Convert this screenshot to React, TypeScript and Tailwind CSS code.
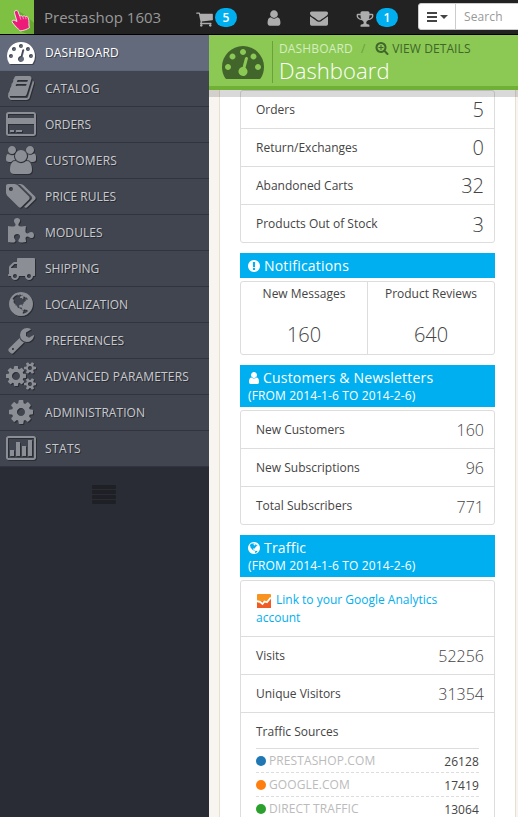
import React from "react";

type Glyph = { d: string; w: number };

const GLYPHS = {
  dashboard: { w: 1792, d: "M384 1152q0-53-37.5-90.5t-90.5-37.5-90.5 37.5-37.5 90.5 37.5 90.5 90.5 37.5 90.5-37.5 37.5-90.5zm192-448q0-53-37.5-90.5t-90.5-37.5-90.5 37.5-37.5 90.5 37.5 90.5 90.5 37.5 90.5-37.5 37.5-90.5zm428 481l101-382q6-26-7.5-48.5t-38.5-29.5-48 6.5-30 39.5l-101 382q-60 5-107 43.5t-63 98.5q-20 77 20 146t117 89 146-20 89-117q16-60-6-117t-72-91zm660-33q0-53-37.5-90.5t-90.5-37.5-90.5 37.5-37.5 90.5 37.5 90.5 90.5 37.5 90.5-37.5 37.5-90.5zm-640-640q0-53-37.5-90.5t-90.5-37.5-90.5 37.5-37.5 90.5 37.5 90.5 90.5 37.5 90.5-37.5 37.5-90.5zm448 192q0-53-37.5-90.5t-90.5-37.5-90.5 37.5-37.5 90.5 37.5 90.5 90.5 37.5 90.5-37.5 37.5-90.5zm320 448q0 261-141 483-19 29-54 29h-1402q-35 0-54-29-141-221-141-483 0-182 71-348t191-286 286-191 348-71 348 71 286 191 191 286 71 348z" },
  book: { w: 1792, d: "M1703 478q40 57 18 129l-275 906q-19 64-76.5 107.5t-122.5 43.5h-923q-77 0-148.5-53.5t-99.5-131.5q-24-67-2-127 0-4 3-27t4-37q1-8-3-21.5t-3-19.5q2-11 8-21t16.5-23.5 16.5-23.5q23-38 45-91.5t30-91.5q3-10 .5-30t-.5-28q3-11 17-28t17-23q21-36 42-92t25-90q1-9-2.5-32t.5-28q4-13 22-30.5t22-22.5q19-26 42.5-84.5t27.5-96.5q1-8-3-25.5t-2-26.5q2-8 9-18t18-23 17-21q8-12 16.5-30.5t15-35 16-36 19.5-32 26.5-23.5 36-11.5 47.5 5.5l-1 3q38-9 51-9h761q74 0 114 56t18 130l-274 906q-36 119-71.5 153.5t-128.5 34.5h-869q-27 0-38 15-11 16-1 43 24 70 144 70h923q29 0 56-15.5t35-41.5l300-987q7-22 5-57 38 15 59 43zm-1064 2q-4 13 2 22.5t20 9.5h608q13 0 25.5-9.5t16.5-22.5l21-64q4-13-2-22.5t-20-9.5h-608q-13 0-25.5 9.5t-16.5 22.5zm-83 256q-4 13 2 22.5t20 9.5h608q13 0 25.5-9.5t16.5-22.5l21-64q4-13-2-22.5t-20-9.5h-608q-13 0-25.5 9.5t-16.5 22.5z" },
  card: { w: 1920, d: "M1760 128q66 0 113 47t47 113v1216q0 66-47 113t-113 47h-1600q-66 0-113-47t-47-113v-1216q0-66 47-113t113-47h1600zm-1600 128q-13 0-22.5 9.5t-9.5 22.5v224h1664v-224q0-13-9.5-22.5t-22.5-9.5h-1600zm1600 1280q13 0 22.5-9.5t9.5-22.5v-608h-1664v608q0 13 9.5 22.5t22.5 9.5h1600zm-1504-128v-128h256v128h-256zm384 0v-128h384v128h-384z" },
  users: { w: 1920, d: "M593 896q-162 5-265 128h-134q-82 0-138-40.5t-56-118.5q0-353 124-353 6 0 43.5 21t97.5 42.5 119 21.5q67 0 133-23-5 37-5 66 0 159 93 293zm1071 637q0 120-73 189.5t-194 69.5h-874q-121 0-194-69.5t-73-189.5q0-53 3.5-103.5t14-109 26.5-108.5 43-97.5 62-81 85.5-53.5 111.5-20q10 0 43 21.5t73 48 107 48 135 21.5 135-21.5 107-48 73-48 43-21.5q61 0 111.5 20t85.5 53.5 62 81 43 97.5 26.5 108.5 14 109 3.5 103.5zm-1024-1277q0 106-75 181t-181 75-181-75-75-181 75-181 181-75 181 75 75 181zm704 384q0 159-112.5 271.5t-271.5 112.5-271.5-112.5-112.5-271.5 112.5-271.5 271.5-112.5 271.5 112.5 112.5 271.5zm576 225q0 78-56 118.5t-138 40.5h-134q-103-123-265-128 93-134 93-293 0-29-5-66 66 23 133 23 59 0 119-21.5t97.5-42.5 43.5-21q124 0 124 353zm-128-609q0 106-75 181t-181 75-181-75-75-181 75-181 181-75 181 75 75 181z" },
  tags: { w: 1920, d: "M448 448q0-53-37.5-90.5t-90.5-37.5-90.5 37.5-37.5 90.5 37.5 90.5 90.5 37.5 90.5-37.5 37.5-90.5zm1067 576q0 53-37 90l-491 492q-39 37-91 37-53 0-90-37l-715-716q-38-37-64.5-101t-26.5-117v-416q0-52 38-90t90-38h416q53 0 117 26.5t102 64.5l715 714q37 39 37 91zm384 0q0 53-37 90l-491 492q-39 37-91 37-36 0-59-14t-53-45l470-470q37-37 37-90 0-52-37-91l-715-714q-38-38-102-64.5t-117-26.5h224q53 0 117 26.5t102 64.5l715 714q37 39 37 91z" },
  puzzle: { w: 1792, d: "M1728 1098q0 81-44.5 135t-123.5 54q-41 0-77.5-17.5t-59-38-56.5-38-71-17.5q-110 0-110 124 0 39 16 115t15 115v5q-22 0-33 1-34 3-97.5 11.5t-115.5 13.5-98 5q-61 0-103-26.5t-42-83.5q0-37 17.5-71t38-56.5 38-59 17.5-77.5q0-79-54-123.5t-135-44.5q-84 0-143 45.5t-59 127.5q0 43 15 83t33.5 64.5 33.5 53 15 50.5q0 45-46 89-37 35-117 35-95 0-245-24-9-2-27.5-4t-27.5-4l-13-2q-1 0-3-1-2 0-2-1v-1024q2 1 17.5 3.5t34 5 21.5 3.5q150 24 245 24 80 0 117-35 46-44 46-89 0-22-15-50.5t-33.5-53-33.5-64.5-15-83q0-82 59-127.5t144-45.5q80 0 134 44.5t54 123.5q0 41-17.5 77.5t-38 59-38 56.5-17.5 71q0 57 42 83.5t103 26.5q64 0 180-15t163-17v2q-1 2-3.5 17.5t-5 34-3.5 21.5q-24 150-24 245 0 80 35 117 44 46 89 46 22 0 50.5-15t53-33.5 64.5-33.5 83-15q82 0 127.5 59t45.5 143z" },
  truck: { w: 1792, d: "M640 1408q0-52-38-90t-90-38-90 38-38 90 38 90 90 38 90-38 38-90zm-384-512h384v-256h-158q-13 0-22 9l-195 195q-9 9-9 22v30zm1280 512q0-52-38-90t-90-38-90 38-38 90 38 90 90 38 90-38 38-90zm256-1088v1024q0 15-4 26.5t-13.5 18.5-16.5 11.5-23.5 6-22.5 2-25.5 0-22.5-.5q0 106-75 181t-181 75-181-75-75-181h-384q0 106-75 181t-181 75-181-75-75-181h-64q-3 0-22.5.5t-25.5 0-22.5-2-23.5-6-16.5-11.5-13.5-18.5-4-26.5q0-26 19-45t45-19v-320q0-8-.5-35t0-38 2.5-34.5 6.5-37 14-30.5 22.5-30l198-198q19-19 50.5-32t58.5-13h160v-192q0-26 19-45t45-19h1024q26 0 45 19t19 45z" },
  globe: { w: 1792, d: "M896 128q209 0 385.5 103t279.5 279.5 103 385.5-103 385.5-279.5 279.5-385.5 103-385.5-103-279.5-279.5-103-385.5 103-385.5 279.5-279.5 385.5-103zm274 521q-2 1-9.5 9.5t-13.5 9.5q2 0 4.5-5t5-11 3.5-7q6-7 22-15 14-6 52-12 34-8 51 11-2-2 9.5-13t14.5-12q3-2 15-4.5t15-7.5l2-22q-12 1-17.5-7t-6.5-21q0 2-6 8 0-7-4.5-8t-11.5 1-9 1q-10-3-15-7.5t-8-16.5-4-15q-2-5-9.5-11t-9.5-10q-1-2-2.5-5.5t-3-6.5-4-5.5-5.5-2.5-7 5-7.5 10-4.5 5q-3-2-6-1.5t-4.5 1-4.5 3-5 3.5q-3 2-8.5 3t-8.5 2q15-5-1-11-10-4-16-3 9-4 7.5-12t-8.5-14h5q-1-4-8.5-8.5t-17.5-8.5-13-6q-8-5-34-9.5t-33-.5q-5 6-4.5 10.5t4 14 3.5 12.5q1 6-5.5 13t-6.5 12q0 7 14 15.5t10 21.5q-3 8-16 16t-16 12q-5 8-1.5 18.5t10.5 16.5q2 2 1.500 4t-3.500 4.500-5.500 4-6.500 3.500l-3 2q-11 5-20.500-6t-13.500-26q-7-25-16-30-23-8-29 1-5-13-41-26-25-9-58-4 6-1 0-15-7-15-19-12 3-6 4-17.500t1-13.500q3-13 12-23 1-1 7-8.500t9.500-13.500.5-6q35 4 50-11 5-5 11.500-17t10.500-17q9-6 14-5.500t14.500 5.500 14.500 5q14 1 15.500-11t-7.500-20q12 1 3-17-4-7-8-9-12-4-27 5-8 4 2 8-1-1-9.500 10.500t-16.500 17.500-16-5q-1-1-5.500-13.500t-9.500-13.500q-8 0-16 15 3-8-11-15t-24-8q19-12-8-27-7-4-20.500-5t-19.500 4q-5 7-5.500 11.500t5 8 10.500 5.500 11.500 4 8.500 3q14 10 8 14-2 1-8.500 3.500t-11.500 4.500-6 4q-3 4 0 14t-2 14q-5-5-9-17.500t-7-16.500q7 9-25 6l-10-1q-4 0-16 2t-20.500 1-13.500-8q-4-8 0-20 1-4 4-2-4-3-11-9.500t-10-8.500q-46 15-94 41 6 1 12-1 5-2 13-6.500t10-5.500q34-14 42-7l5-5q14 16 20 25-7-4-30-1-20 6-22 12 7 12 5 18-4-3-11.500-10t-14.500-11-15-5q-16 0-22 1-146 80-235 222 7 7 12 8 4 1 5 9t2.500 11 11.500-3q9 8 3 19 1-1 44 27 19 17 21 21 3 11-10 18-1-2-9-9t-9-4q-3 5 .5 18.500t10.500 12.500q-7 0-9.500 16t-2.500 35.500-1 23.500l2 1q-3 12 5.500 34.500t21.500 19.500q-13 3 20 43 6 8 8 9 3 2 12 7.500t15 10 10 10.500q4 5 10 22.500t14 23.500q-2 6 9.500 20t10.500 23q-1 0-2.500 1t-2.500 1q3 7 15.500 14t15.500 13q1 3 2 10t3 11 8 2q2-20-24-62-15-25-17-29-3-5-5.500-15.500t-4.500-14.500q2 0 6 1.500t8.500 3.500 7.500 4 2 3q-3 7 2 17.500t12 18.500 17 19 12 13q6 6 14 19.500t0 13.500q9 0 20 10.500t17 19.500q5 8 8 26t5 24q2 7 8.500 13.500t12.500 9.500l16 8 13 7q5 2 18.500 10.500t21.500 11.500q10 4 16 4t14.500-2.500 13.500-3.500q15-2 29 15t21 21q36 19 55 11-2 1 .5 7.500t8 15.500 9 14.500 5.500 8.500q5 6 18 15t18 15q6-4 7-9-3 8 7 20t18 10q14-3 14-32-31 15-49-18 0-1-2.500-5.500t-4-8.500-2.500-8.500 0-7.500 5-3q9 0 10-3.500t-2-12.500-4-13q-1-8-11-20t-12-15q-5 9-16 8t-16-9q0 1-1.500 5.500t-1.500 6.500q-13 0-15-1 1-3 2.500-17.500t3.500-22.500q1-4 5.500-12t7.500-14.500 4-12.500-4.500-9.500-17.500-2.500q-19 1-26 20-1 3-3 10.500t-5 11.500-9 7q-7 3-24 2t-24-5q-13-8-22.500-29t-9.500-37q0-10 2.500-26.500t3-25-5.500-24.500q3-2 9-9.500t10-10.500q2-1 4.500-1.500t4.500 0 4-1.500 3-6q-1-1-4-3-3-3-4-3 7 3 28.500-1.500t27.500 1.500q15 11 22-2 0-1-2.500-9.500t-.5-13.500q5 27 29 9 3 3 15.500 5t17.500 5q3 2 7 5.500t5.500 4.500 5-.5 8.500-6.500q10 14 12 24 11 40 19 44 7 3 11 2t4.500-9.500 0-14-1.500-12.500l-1-8v-18l-1-8q-15-3-18.500-12t1.500-18.500 15-18.500q1-1 8-3.500t15.500-6.500 12.500-8q21-19 15-35 7 0 11-9-1 0-5-3t-7.500-5-4.500-2q9-5 2-16 5-3 7.500-11t7.500-10q9 12 21 2 8-8 1-16 5-7 20.500-10.500t18.500-9.500q7 2 8-2t1-12 3-12q4-5 15-9t13-5l17-11q3-4 0-4 18 2 31-11 10-11-6-20 3-6-3-9.500t-15-5.500q3-1 11.500-.5t10.500-1.500q15-10-7-16-17-5-43 12zm-163 877q206-36 351-189-3-3-12.500-4.500t-12.500-3.500q-18-7-24-8 1-7-2.500-13t-8-9-12.500-8-11-7q-2-2-7-6t-7-5.500-7.500-4.500-8.500-2-10 1l-3 1q-3 1-5.500 2.500t-5.500 3-4 3 0 2.500q-21-17-36-22-5-1-11-5.500t-10.500-7-10-1.500-11.500 7q-5 5-6 15t-2 13q-7-5 0-17.500t2-18.500q-3-6-10.500-4.500t-12 4.500-11.500 8.500-9 6.500-8.500 5.500-8.500 7.500q-3 4-6 12t-5 11q-2-4-11.500-6.500t-9.500-5.500q2 10 4 35t5 38q7 31-12 48-27 25-29 40-4 22 12 26 0 7-8 20.500t-7 21.500q0 6 2 16z" },
  wrench: { w: 1792, d: "M448 1472q0-26-19-45t-45-19-45 19-19 45 19 45 45 19 45-19 19-45zm644-420l-682 682q-37 37-90 37-52 0-91-37l-106-108q-38-36-38-90 0-53 38-91l681-681q39 98 114.5 173.5t173.5 114.5zm634-435q0 39-23 106-47 134-164.5 217.5t-258.5 83.5q-185 0-316.5-131.5t-131.5-316.5 131.5-316.5 316.5-131.5q58 0 121.5 16.5t107.5 46.5q16 11 16 28t-16 28l-293 169v224l193 107q5-3 79-48.5t135.5-81 70.5-35.5q15 0 23.5 10t8.5 25z" },
  cogs: { w: 1920, d: "M896 896q0-106-75-181t-181-75-181 75-75 181 75 181 181 75 181-75 75-181zm768 512q0-52-38-90t-90-38-90 38-38 90q0 53 37.5 90.5t90.5 37.5 90.5-37.5 37.5-90.5zm0-1024q0-52-38-90t-90-38-90 38-38 90q0 53 37.5 90.5t90.5 37.5 90.5-37.5 37.5-90.5zm-384 421v185q0 10-7 19.5t-16 10.5l-155 24q-11 35-32 76 34 48 90 115 7 11 7 20 0 12-7 19-23 30-82.5 89.5t-78.5 59.5q-11 0-21-7l-115-90q-37 19-77 31-11 108-23 155-7 24-30 24h-186q-11 0-20-7.5t-10-17.5l-23-153q-34-10-75-31l-118 89q-7 7-20 7-11 0-21-8-144-133-144-160 0-9 7-19 10-14 41-53t47-61q-23-44-35-82l-152-24q-10-1-17-9.5t-7-19.5v-185q0-10 7-19.5t16-10.5l155-24q11-35 32-76-34-48-90-115-7-11-7-20 0-12 7-20 22-30 82-89t79-59q11 0 21 7l115 90q34-18 77-32 11-108 23-154 7-24 30-24h186q11 0 20 7.5t10 17.5l23 153q34 10 75 31l118-89q8-7 20-7 11 0 21 8 144 133 144 160 0 8-7 19-12 16-42 54t-45 60q23 48 34 82l152 23q10 2 17 10.5t7 19.5zm640 533v140q0 16-149 31-12 27-30 52 51 113 51 138 0 4-4 7-122 71-124 71-8 0-46-47t-52-68q-20 2-30 2t-30-2q-14 21-52 68t-46 47q-2 0-124-71-4-3-4-7 0-25 51-138-18-25-30-52-149-15-149-31v-140q0-16 149-31 13-29 30-52-51-113-51-138 0-4 4-7 4-2 35-20t59-34 30-16q8 0 46 46.5t52 67.5q20-2 30-2t30 2q51-71 92-112l6-2q4 0 124 70 4 3 4 7 0 25-51 138 17 23 30 52 149 15 149 31zm0-1024v140q0 16-149 31-12 27-30 52 51 113 51 138 0 4-4 7-122 71-124 71-8 0-46-47t-52-68q-20 2-30 2t-30-2q-14 21-52 68t-46 47q-2 0-124-71-4-3-4-7 0-25 51-138-18-25-30-52-149-15-149-31v-140q0-16 149-31 13-29 30-52-51-113-51-138 0-4 4-7 4-2 35-20t59-34 30-16q8 0 46 46.5t52 67.5q20-2 30-2t30 2q51-71 92-112l6-2q4 0 124 70 4 3 4 7 0 25-51 138 17 23 30 52 149 15 149 31z" },
  cog: { w: 1792, d: "M1152 896q0-106-75-181t-181-75-181 75-75 181 75 181 181 75 181-75 75-181zm512-109v222q0 12-8 23t-20 13l-185 28q-19 54-39 91 35 50 107 138 10 12 10 25t-9 23q-27 37-99 108t-94 71q-12 0-26-9l-138-108q-44 23-91 38-16 136-29 186-7 28-36 28h-222q-14 0-24.5-8.5t-11.5-21.5l-28-184q-49-16-90-37l-141 107q-10 9-25 9-14 0-25-11-126-114-165-168-7-10-7-23 0-12 8-23 15-21 51-66.5t54-70.5q-27-50-41-99l-183-27q-13-2-21-12.5t-8-23.5v-222q0-12 8-23t19-13l186-28q14-46 39-92-40-57-107-138-10-12-10-24 0-10 9-23 26-36 98.5-107.5t94.5-71.5q13 0 26 10l138 107q44-23 91-38 16-136 29-186 7-28 36-28h222q14 0 24.5 8.5t11.5 21.5l28 184q49 16 90 37l142-107q9-9 24-9 13 0 25 10 129 119 165 170 7 8 7 22 0 12-8 23-15 21-51 66.5t-54 70.5q26 50 41 98l183 28q13 2 21 12.5t8 23.5z" },
  chart: { w: 1920, d: "M1760 128q66 0 113 47t47 113v1216q0 66-47 113t-113 47h-1600q-66 0-113-47t-47-113v-1216q0-66 47-113t113-47h1600zm-1600 128q-13 0-22.5 9.5t-9.5 22.5v1216q0 13 9.5 22.5t22.5 9.5h1600q13 0 22.5-9.5t9.5-22.5v-1216q0-13-9.5-22.5t-22.5-9.5h-1600zM256 1024h256v384h-256zM640 512h256v896h-256zM1024 768h256v640h-256zM1408 384h256v1024h-256z" },
  cart: { w: 1792, d: "M704 1536q0 52-38 90t-90 38-90-38-38-90 38-90 90-38 90 38 38 90zm896 0q0 52-38 90t-90 38-90-38-38-90 38-90 90-38 90 38 38 90zm128-1088v512q0 24-16.5 42.5t-40.5 21.5l-1044 122q13 60 13 70 0 16-24 64h920q26 0 45 19t19 45-19 45-45 19h-1024q-26 0-45-19t-19-45q0-11 8-31.5t16-36 21.5-40 15.5-29.5l-177-823h-204q-26 0-45-19t-19-45 19-45 45-19h256q16 0 28.5 6.5t19.5 15.5 13 24.5 8 26 5.5 29.5 4.5 26h1201q26 0 45 19t19 45z" },
  user: { w: 1792, d: "M1536 1399q0 109-62.5 187t-150.5 78h-854q-88 0-150.5-78t-62.5-187q0-85 8.5-160.5t31.5-152 58.5-131 94-89 134.5-34.5q131 128 313 128t313-128q76 0 134.5 34.5t94 89 58.5 131 31.5 152 8.5 160.5zm-256-887q0 159-112.5 271.5t-271.5 112.5-271.5-112.5-112.5-271.5 112.5-271.5 271.5-112.5 271.5 112.5 112.5 271.5z" },
  mail: { w: 1792, d: "M1792 710v794q0 66-47 113t-113 47h-1472q-66 0-113-47t-47-113v-794q44 49 101 87 362 246 497 345 57 42 92.5 65.5t94.5 48 110 24.5h2q51 0 110-24.5t94.5-48 92.5-65.5q170-123 498-345 57-39 100-87zm0-294q0 79-49 151t-122 123q-376 261-468 325-10 7-42.5 31t-54 38.5-52 32.5-57.5 27-50 9h-2q-23 0-50-9t-57.5-27-52-32.5-54-38.5-42.5-31q-91-64-262-182.5t-205-142.5q-62-42-117-115.5t-55-136.5q0-78 41.5-130t118.5-52h1472q65 0 112.5 47t47.5 113z" },
  trophy: { w: 1792, d: "M522 883q-74-162-74-371h-256v96q0 78 94.5 162t235.5 113zm1078-275v-96h-256q0 209-74 371 141-29 235.5-113t94.5-162zm128-128v128q0 71-41.5 143t-112 130-173 97.5-215.5 44.5q-42 54-95 95-38 34-52.5 72.5t-14.5 89.5q0 54 30.5 91t97.5 37q75 0 133.5 45.5t58.5 114.5v64q0 14-9 23t-23 9h-832q-14 0-23-9t-9-23v-64q0-69 58.5-114.5t133.5-45.5q67 0 97.5-37t30.5-91q0-51-14.5-89.5t-52.5-72.5q-53-41-95-95-113-5-215.5-44.5t-173-97.5-112-130-41.5-143v-128q0-40 28-68t68-28h288v-96q0-66 47-113t113-47h576q66 0 113 47t47 113v96h288q40 0 68 28t28 68z" },
  zoom: { w: 1792, d: "M1088 800v64q0 13-9.5 22.5t-22.5 9.5h-224v224q0 13-9.5 22.5t-22.5 9.5h-64q-13 0-22.5-9.5t-9.5-22.5v-224h-224q-13 0-22.5-9.5t-9.5-22.5v-64q0-13 9.5-22.5t22.5-9.5h224v-224q0-13 9.5-22.5t22.5-9.5h64q13 0 22.5 9.5t9.5 22.5v224h224q13 0 22.5 9.5t9.5 22.5zm128 32q0-185-131.5-316.5t-316.5-131.5-316.5 131.5-131.5 316.5 131.5 316.5 316.5 131.5 316.5-131.5 131.5-316.5zm512 832q0 53-37.5 90.5t-90.5 37.5q-54 0-90-38l-343-342q-179 124-399 124-143 0-273.5-55.5t-225-150-150-225-55.5-273.5 55.5-273.5 150-225 225-150 273.5-55.5 273.5 55.5 225 150 150 225 55.5 273.5q0 220-124 399l343 343q37 37 37 90z" },
  alert: { w: 1792, d: "M896 128q209 0 385.5 103t279.5 279.5 103 385.5-103 385.5-279.5 279.5-385.5 103-385.5-103-279.5-279.5-103-385.5 103-385.5 279.5-279.5 385.5-103zm128 1247v-190q0-14-9-23.5t-22-9.5h-192q-13 0-23 10t-10 23v190q0 13 10 23t23 10h192q13 0 22-9.5t9-23.5zm-2-344l18-621q0-12-10-18-10-8-24-8h-220q-14 0-24 8-10 6-10 18l17 621q0 10 10 17.5t24 7.5h185q14 0 23.5-7.5t10.5-17.5z" },
} satisfies Record<string, Glyph>;

type IconName = keyof typeof GLYPHS;

function Icon({ name, size, className = "" }: { name: IconName; size: number; className?: string }) {
  const g = GLYPHS[name];
  return (
    <svg
      width={(size * g.w) / 1792}
      height={size}
      viewBox={`0 0 ${g.w} 1792`}
      fill="currentColor"
      className={`shrink-0 ${className}`}
    >
      <path d={g.d} />
    </svg>
  );
}

const MENU: { icon: IconName; label: string; spacing?: string }[] = [
  { icon: "dashboard", label: "DASHBOARD", spacing: "tracking-[0.15px]" },
  { icon: "book", label: "CATALOG", spacing: "tracking-[0.15px]" },
  { icon: "card", label: "ORDERS" },
  { icon: "users", label: "CUSTOMERS", spacing: "tracking-[0.2px]" },
  { icon: "tags", label: "PRICE RULES" },
  { icon: "puzzle", label: "MODULES", spacing: "tracking-[0.1px]" },
  { icon: "truck", label: "SHIPPING" },
  { icon: "globe", label: "LOCALIZATION" },
  { icon: "wrench", label: "PREFERENCES", spacing: "tracking-[0.1px]" },
  { icon: "cogs", label: "ADVANCED PARAMETERS", spacing: "tracking-[0.18px]" },
  { icon: "cog", label: "ADMINISTRATION", spacing: "tracking-[0.05px]" },
  { icon: "chart", label: "STATS", spacing: "tracking-[0.4px]" },
];

function Logo() {
  return (
    <div className="h-[34px] w-[34px] shrink-0 bg-[#7ec142]">
      <svg width="34" height="34" viewBox="0 0 34 34">
        <path d="M18.500 11L28 17l6 6v11h-7l-9-4z" fill="#5f9a2e" opacity="0.7" />
        <path
          d="M15.600 10.700c1.100-.6 2.100-.1 2.500 1l1.700 4.700c.9-1 2.200-.8 2.900.1.900-.9 2.100-.7 2.800.2.900-.6 2.100-.2 2.600.9.800 1.800.9 4.300.8 6.200-.1 1.900.4 2.700.5 3.900-2.600 1.800-5.600 2.800-9.300 3.200-.8-1.400-2.300-2.200-3.900-3.800-1.500-1.500-2.600-3.400-4.100-5.100-.4-1.300.9-2.100 2.300-1.700l2.600 1.200-2.400-8.300c-.3-1.200-.1-2 1-2.500z"
          fill="#ed1c78"
          stroke="#fff"
          strokeWidth="0.8"
        />
        <path d="M20 17l.8 2.600M22.900 17l.6 2.200M25.700 17.300l.3 1.800" stroke="#fff" strokeWidth="0.500" />
      </svg>
    </div>
  );
}

function Badge({ children }: { children: React.ReactNode }) {
  return (
    <span className="flex h-[19px] w-[22px] items-center justify-center rounded-full bg-[#00aff0] text-[12px] leading-[19px] font-semibold text-white">
      {children}
    </span>
  );
}

function TopBar() {
  return (
    <header className="flex h-[35px] shrink-0 border-b border-black bg-[#222] text-[#adadad]">
      <Logo />
      <div className="w-[161px] shrink-0 pl-[10px] text-[15px] leading-[34px] whitespace-nowrap text-[#999]">Prestashop 1603</div>
      <div className="flex w-[223px] shrink-0 pt-[8px]">
        <Icon name="cart" size={18} className="mt-[2px] w-[19px]" />
        <div className="ml-[1px]">
          <Badge>5</Badge>
        </div>
        <Icon name="user" size={18} className="mt-[1px] ml-[28px]" />
        <Icon name="mail" size={18} className="mt-[1px] ml-[27px]" />
        <Icon name="trophy" size={18} className="mt-[2px] ml-[28px]" />
        <div className="ml-[2px]">
          <Badge>1</Badge>
        </div>
      </div>
      <div className="mt-[3px] flex h-[27px] w-[110px] shrink-0 rounded-l-[3px] border border-[#ccc] bg-white text-[12px]">
        <div className="flex w-[37px] items-center border-r border-[#ccc] pl-[8px] text-[#333]">
          <div className="flex flex-col gap-[2px]">
            <i className="h-[2px] w-[10px] bg-[#444]" />
            <i className="h-[2px] w-[10px] bg-[#444]" />
            <i className="h-[2px] w-[10px] bg-[#444]" />
          </div>
          <i className="ml-[3px] border-x-4 border-t-4 border-x-transparent border-t-[#444]" />
        </div>
        <span className="pl-[8px] leading-[25px] tracking-[0.1px] text-[#999]">Search</span>
      </div>
    </header>
  );
}

function Sidebar() {
  return (
    <nav className="w-[209px] shrink-0 bg-[#2a2c35]">
      {MENU.map((m, i) => (
        <div
          key={m.label}
          className={`flex h-[36px] border-b pt-[3px] ${
            i === 0 ? "border-[#5d6676] bg-[#626a7b] text-white" : "border-[#31343e] bg-[#41454f] text-[#c9cace]"
          }`}
        >
          <div
            className={`flex w-[42px] shrink-0 justify-center drop-shadow-[1px_1px_0_rgba(0,0,0,0.35)] ${
              i === 0 ? "text-white" : "text-[#8b8e95]"
            }`}
          >
            <Icon name={m.icon} size={28} />
          </div>
          <span
            className={`pl-[3px] text-[12px] leading-[29px] whitespace-nowrap [text-shadow:1px_1px_0_rgba(0,0,0,0.4)] ${m.spacing ?? ""}`}
          >
            {m.label}
          </span>
        </div>
      ))}
      <div className="ml-[92px] flex w-[24px] flex-col gap-[1px] pt-[18px]">
        <i className="h-[4px] rounded-[1px] bg-[#1e2026]" />
        <i className="h-[4px] rounded-[1px] bg-[#1e2026]" />
        <i className="h-[4px] rounded-[1px] bg-[#1e2026]" />
        <i className="h-[4px] rounded-[1px] bg-[#1e2026]" />
      </div>
    </nav>
  );
}

function PageHead() {
  return (
    <div className="relative flex h-[55px] shrink-0 border-b-4 border-[#70b135] bg-[#8bc954]">
      <Icon name="dashboard" size={42} className="mt-[5px] ml-[13px] text-[#41652a]" />
      <div className="mt-[6px] ml-[8px] h-[42px] w-px bg-[#6ba03c]" />
      <div className="pl-[6px]">
        <div className="flex h-[19px] pt-[4px] text-[12px] leading-[19px] text-[#d6edc0]">
          <span className="tracking-[0.15px]">DASHBOARD</span>
          <span className="ml-[8px] text-[#6ba03c]">/</span>
          <Icon name="zoom" size={14} className="mt-[2px] ml-[10px] text-[#41652a]" />
          <span className="ml-[3px] tracking-[0.1px] text-[#41652a]">VIEW DETAILS</span>
        </div>
        <div className="text-[22px] leading-[32px] font-light tracking-[0.1px] text-white">Dashboard</div>
      </div>
      <div className="absolute inset-x-0 top-[55px] z-10 h-[7px] bg-black/15" />
    </div>
  );
}

function SectionHead({ icon, title, range }: { icon: IconName; title: string; range?: string }) {
  return (
    <div className={`mt-[10px] mb-[3px] bg-[#00aff0] pl-[7px] text-white ${range ? "h-[42px]" : "h-[25px]"}`}>
      <div className="flex text-[14px] leading-[25px] tracking-[0.2px]">
        <Icon name={icon} size={14} className="mt-[6px]" />
        <span className={icon === "user" ? "ml-[2px]" : "ml-[3px]"}>{title}</span>
      </div>
      {range && <div className="pl-px text-[12px] leading-[12px] font-medium tracking-[0.13px]">{range}</div>}
    </div>
  );
}

function Row({ label, value, size }: { label: string; value: string; size: string }) {
  return (
    <div className="flex h-[38px] items-center justify-between border-b border-[#ddd] pr-[10px] pl-[15px] text-[12px] last:border-b-0">
      <span>{label}</span>
      <span className={`pt-px ${size}`}>{value}</span>
    </div>
  );
}

function Box({ children, className = "" }: { children: React.ReactNode; className?: string }) {
  return <div className={`rounded-[3px] border border-[#ddd] bg-white ${className}`}>{children}</div>;
}

const SOURCES = [
  { name: "PRESTASHOP.COM", value: "26128", dot: "bg-[#1f77b4]" },
  { name: "GOOGLE.COM", value: "17419", dot: "bg-[#ff7f0e]" },
  { name: "DIRECT TRAFFIC", value: "13064", dot: "bg-[#2ca02c]" },
];

function AnalyticsIcon() {
  return (
    <svg width="14" height="14" viewBox="0 0 14 14" className="mr-[5px] ml-px inline-block align-[-4px]">
      <rect width="14" height="14" rx="1" fill="#f7931e" />
      <path d="M0 8.500L3 9.500 5 7l3 2.500 6-6V14H0z" fill="#f15a24" />
      <path d="M0 7l3 .8L5.500 10l2-2.500 2.500.8L13.800 3.500" fill="none" stroke="#fff" strokeWidth="1.800" />
    </svg>
  );
}

const LARGE = "text-[20px] font-light";
const MEDIUM = "text-[16px] font-light";

function Pane() {
  return (
    <div className="ml-[10px] h-full w-[297px] border-x border-[#e6e0d0] bg-white px-[20px] text-[#444]">
      <Box className="h-[153px]">
        <Row label="Orders" value="5" size={LARGE} />
        <Row label="Return/Exchanges" value="0" size={LARGE} />
        <Row label="Abandoned Carts" value="32" size={LARGE} />
        <Row label="Products Out of Stock" value="3" size={LARGE} />
      </Box>
      <SectionHead icon="alert" title="Notifications" />
      <Box className="flex h-[74px] text-center text-[12px]">
        <div className="w-[127px] border-r border-[#ddd] pt-[3px]">
          <div>New Messages</div>
          <div className="pt-[17px] text-[20px] font-light">160</div>
        </div>
        <div className="flex-1 pt-[3px]">
          <div>Product Reviews</div>
          <div className="pt-[17px] text-[20px] font-light">640</div>
        </div>
      </Box>
      <SectionHead icon="user" title="Customers & Newsletters" range="(FROM 2014-1-6 TO 2014-2-6)" />
      <Box className="h-[115px]">
        <Row label="New Customers" value="160" size={MEDIUM} />
        <Row label="New Subscriptions" value="96" size={MEDIUM} />
        <Row label="Total Subscribers" value="771" size={MEDIUM} />
      </Box>
      <SectionHead icon="globe" title="Traffic" range="(FROM 2014-1-6 TO 2014-2-6)" />
      <Box>
        <div className="h-[56px] border-b border-[#ddd] pt-[10px] pl-[15px] text-[12px] leading-[18px] text-[#00aff0]">
          <AnalyticsIcon />
          Link to your Google Analytics
          <br />
          account
        </div>
        <Row label="Visits" value="52256" size={MEDIUM} />
        <Row label="Unique Visitors" value="31354" size={MEDIUM} />
        <div className="px-[15px] text-[12px]">
          <div className="h-[36px] border-b border-[#ddd] leading-[38px]">Traffic Sources</div>
          {SOURCES.map((s) => (
            <div key={s.name} className="flex h-[24px] items-center border-b border-dashed border-[#ddd]">
              <i className={`mr-[3px] h-[10px] w-[10px] rounded-full ${s.dot}`} />
              <span className="tracking-[0.1px] text-[#bbb]">{s.name}</span>
              <span className="ml-auto pt-[2px] tracking-[0.1px]">{s.value}</span>
            </div>
          ))}
        </div>
      </Box>
    </div>
  );
}

export default function App() {
  return (
    <div className="flex h-[817px] w-[518px] flex-col overflow-hidden font-['Open_Sans',sans-serif]">
      <TopBar />
      <div className="flex min-h-0 flex-1">
        <Sidebar />
        <main className="flex min-w-0 flex-1 flex-col bg-[#f8f5f0]">
          <PageHead />
          <div className="min-h-0 flex-1 overflow-hidden">
            <Pane />
          </div>
        </main>
      </div>
    </div>
  );
}
